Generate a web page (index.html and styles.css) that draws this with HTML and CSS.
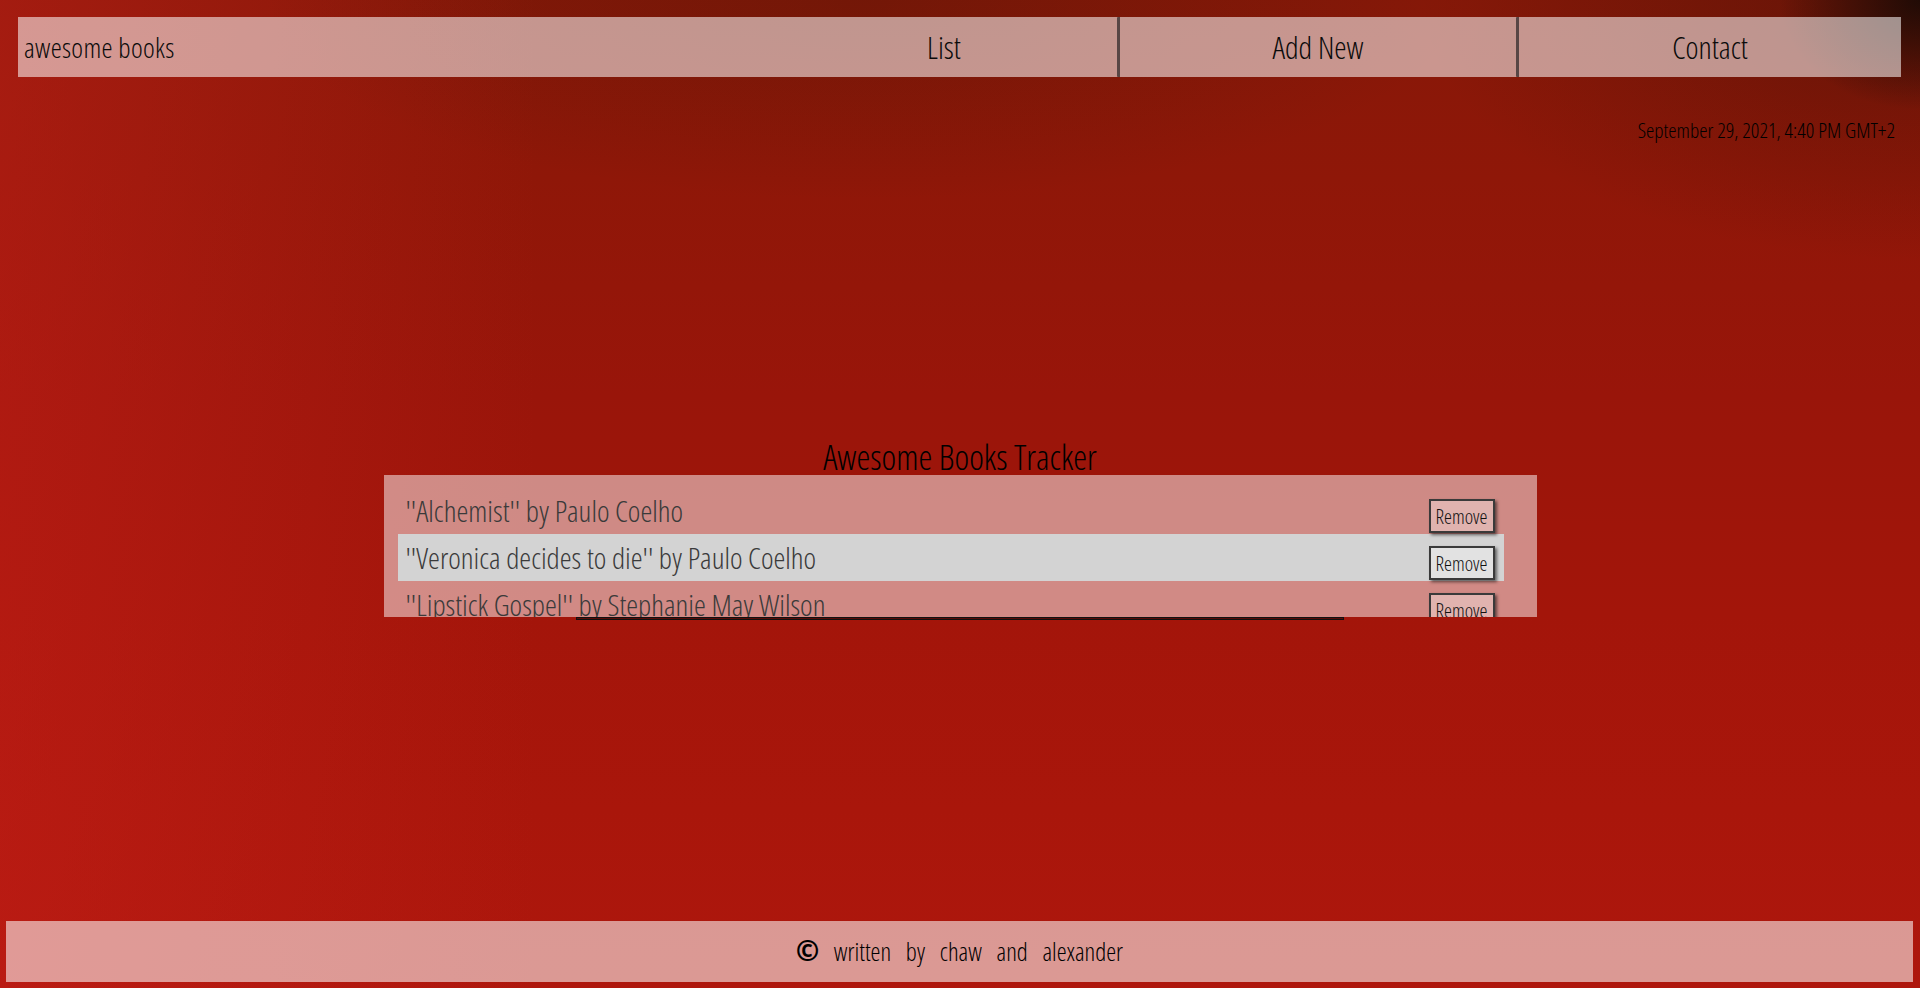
FILE: index.html
```html
<!DOCTYPE html>
<html lang="en">
<head>
<meta charset="utf-8">
<title>Awesome Books</title>
<link rel="stylesheet" href="styles.css">
</head>
<body>
<header class="topbar">
  <nav class="nav">
    <a class="logo" href="#">awesome books</a>
    <a class="nav-link" href="#">List</a>
    <a class="nav-link nav-link--sep" href="#">Add New</a>
    <a class="nav-link nav-link--sep" href="#">Contact</a>
  </nav>
  <p class="date">September 29, 2021, 4:40 PM GMT+2</p>
</header>
<main class="main">
  <h1 class="title">Awesome Books Tracker</h1>
  <section class="book-box">
    <ul class="book-list">
      <li class="book"><p class="book-text">''Alchemist'' by Paulo Coelho</p><button class="remove">Remove</button></li>
      <li class="book"><p class="book-text">''Veronica decides to die'' by Paulo Coelho</p><button class="remove">Remove</button></li>
      <li class="book"><p class="book-text">''Lipstick Gospel'' by Stephanie May Wilson</p><button class="remove">Remove</button></li>
    </ul>
  </section>
  <div class="rule"></div>
</main>
<footer class="footer">
  <p class="footer-text"><span class="copy">©</span> written by chaw and alexander</p>
</footer>
</body>
</html>
```
FILE: styles.css
```css
* { box-sizing: border-box; }

html, body { height: 100%; }

body {
  margin: 0;
  min-height: 988px;
  display: flex;
  flex-direction: column;
  font-family: "Open Sans", "Liberation Sans Narrow", "DejaVu Sans Condensed", sans-serif;
  font-stretch: 75%;
  font-weight: 300;
  color: #111;
  background:
    radial-gradient(ellipse 140px 110px at 100% 0%, rgba(25, 10, 5, 0.9), rgba(25, 10, 5, 0)),
    radial-gradient(ellipse 500px 260px at 100% 0%, rgba(50, 15, 5, 0.4), rgba(50, 15, 5, 0)),
    radial-gradient(ellipse 600px 200px at 45% 0%, rgba(60, 20, 5, 0.25), rgba(60, 20, 5, 0)),
    linear-gradient(to right, rgba(200, 32, 26, 0.45) 0%, rgba(200, 32, 26, 0) 28%),
    linear-gradient(to bottom, #861808 0%, #8f1708 18%, #99150a 40%, #a3150a 62%, #a9160b 82%, #ae170d 100%);
}

.topbar { display: flex; flex-direction: column; }

.nav {
  margin: 17px 19px 0 18px;
  height: 60px;
  display: grid;
  grid-template-columns: 1fr 346px 399px 385px;
  background: rgba(255, 255, 255, 0.55);
}

.logo {
  display: flex;
  align-items: center;
  padding-left: 6px;
  font-size: 28px;
  letter-spacing: 0.3px;
  color: #0a0a0a;
  text-decoration: none;
}

.nav-link {
  display: flex;
  align-items: center;
  justify-content: center;
  font-size: 31px;
  color: #0a0a0a;
  text-decoration: none;
}

.nav-link--sep {
  border-left: 3px solid rgba(60, 50, 50, 0.8);
  border-radius: 1px;
}

.date {
  margin: 40px 25px 0 0;
  text-align: right;
  font-size: 21px;
  line-height: 26px;
  color: #000;
}

.main {
  flex: 1;
  display: flex;
  flex-direction: column;
  justify-content: center;
  padding-bottom: 6px;
}

.title {
  margin: 0;
  text-align: center;
  font-size: 35px;
  line-height: 36px;
  font-weight: 300;
  color: #000;
}

.book-box {
  width: 1153px;
  height: 142px;
  margin: 0 auto;
  padding: 12px 33px 0 14px;
  overflow: hidden;
  background: rgba(255, 255, 255, 0.5);
}

.book-list {
  margin: 0;
  padding: 0;
  list-style: none;
}

.book {
  height: 47px;
  display: flex;
  align-items: center;
  justify-content: space-between;
  padding: 0 9px 0 8px;
}

.book:nth-child(even) { background: #d3d3d3; }

.book-text {
  margin: 0;
  font-size: 30px;
  color: #3a3a3a;
}

.remove {
  width: 66px;
  height: 34px;
  margin-top: 12px;
  padding: 0;
  font-family: inherit;
  font-stretch: 75%;
  font-weight: 300;
  font-size: 20px;
  color: #111;
  background: rgba(255, 255, 255, 0.35);
  border: 2px solid #3a3a3a;
  box-shadow: 2px 2px 3px rgba(0, 0, 0, 0.55);
}

.rule {
  width: 768px;
  height: 3px;
  margin: 0 auto;
  border: 1px solid #111;
  background: #5a0a05;
}

.footer {
  margin: 0 7px 6px 6px;
  height: 61px;
  padding-bottom: 4px;
  display: flex;
  align-items: center;
  justify-content: center;
  background: rgba(255, 255, 255, 0.56);
}

.footer-text {
  margin: 0;
  font-size: 25px;
  word-spacing: 10px;
  color: #000;
}

.copy {
  font-size: 28px;
  font-weight: 700;
}
```
